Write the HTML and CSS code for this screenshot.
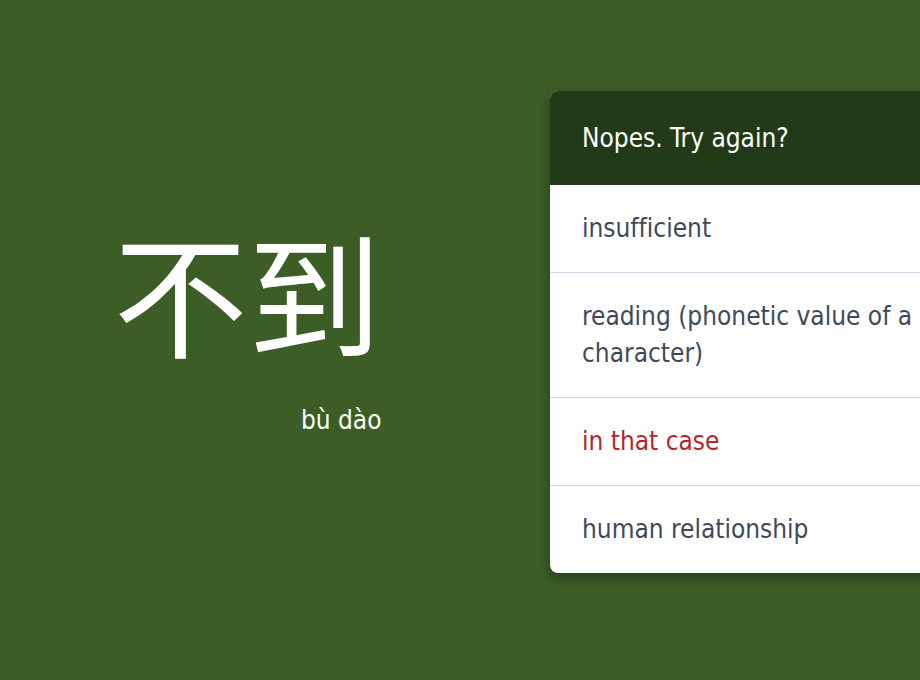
FILE: index.html
```html
<!DOCTYPE html>
<html lang="en">
<head>
<meta charset="utf-8">
<link rel="stylesheet" href="styles.css">
</head>
<body>
<main class="stage">
  <section class="word">
    <div class="word-inner">
      <div class="hanzi" lang="zh-CN">不到</div>
      <div class="pinyin">bù dào</div>
    </div>
  </section>
  <section class="quiz">
    <div class="quiz-head">Nopes. Try again?</div>
    <ul class="options">
      <li class="option">insufficient</li>
      <li class="option">reading (phonetic value of a character)</li>
      <li class="option wrong">in that case</li>
      <li class="option">human relationship</li>
    </ul>
  </section>
</main>
</body>
</html>
```
FILE: styles.css
```css
html, body {
  margin: 0;
  padding: 0;
}
body {
  background: #3c5e26;
  width: 920px;
  height: 680px;
  overflow: hidden;
  font-family: "DejaVu Sans Condensed", "DejaVu Sans", sans-serif;
  font-variant-ligatures: none;
}
.stage {
  display: grid;
  grid-template-columns: 495px 420px;
  column-gap: 55px;
  align-items: start;
  height: 680px;
  padding-top: 91px;
  box-sizing: border-box;
}
.word {
  display: flex;
  justify-content: center;
  margin-top: 132px;
}
.word-inner {
  display: inline-flex;
  flex-direction: column;
  align-items: flex-end;
}
.hanzi {
  color: #ffffff;
  font-family: "Noto Sans CJK SC", sans-serif;
  font-size: 134px;
  line-height: 1;
}
.pinyin {
  color: #ffffff;
  font-size: 26px;
  line-height: 30px;
  margin-top: 48px;
  margin-right: 0;
}
.quiz {
  background: #ffffff;
  border-radius: 8px;
  overflow: hidden;
  box-shadow: 0 5px 14px rgba(0, 0, 0, 0.35);
}
.quiz-head {
  background: #223a17;
  color: #ffffff;
  font-size: 26px;
  padding: 32px 32px;
  line-height: 30px;
}
.options {
  list-style: none;
  margin: 0;
  padding: 0;
}
.option {
  color: #3e4a5b;
  font-size: 26px;
  line-height: 37px;
  padding: 25px 32px;
  border-top: 1px solid #c9d5e8;
}
.option:first-child {
  border-top: none;
}
.option.wrong {
  color: #b3262e;
}
```
